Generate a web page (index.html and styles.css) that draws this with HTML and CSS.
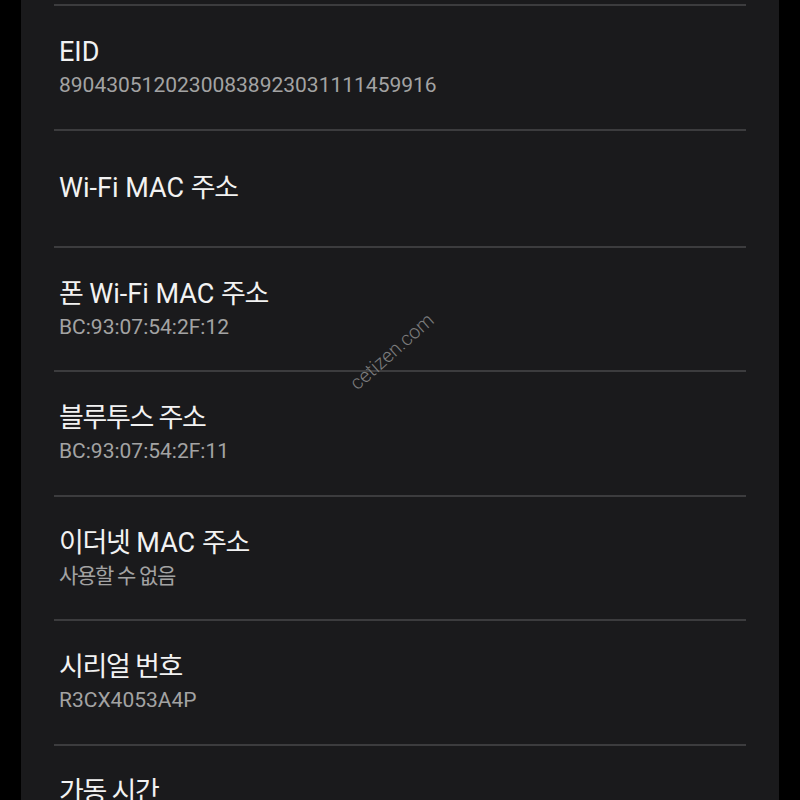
FILE: index.html
```html
<!DOCTYPE html>
<html lang="ko">

<head>
    <meta charset="UTF-8">
    <meta name="viewport" content="width=device-width, initial-scale=1.0">
    <title>휴대전화 정보</title>
    <link rel="stylesheet" href="styles.css">
</head>

<body>
    <div class="screen">
        <div class="card">
            <ul class="info-list">
                <li class="info-row">
                    <span class="info-title">EID</span>
                    <span class="info-value">89043051202300838923031111459916</span>
                </li>
                <li class="info-row single">
                    <span class="info-title">Wi-Fi MAC <span class="ko">주소</span></span>
                </li>
                <li class="info-row">
                    <span class="info-title"><span class="ko">폰</span> Wi-Fi MAC <span class="ko">주소</span></span>
                    <span class="info-value">BC:93:07:54:2F:12</span>
                </li>
                <li class="info-row">
                    <span class="info-title ko">블루투스 주소</span>
                    <span class="info-value">BC:93:07:54:2F:11</span>
                </li>
                <li class="info-row">
                    <span class="info-title"><span class="ko">이더넷</span> MAC <span class="ko">주소</span></span>
                    <span class="info-value ko">사용할 수 없음</span>
                </li>
                <li class="info-row">
                    <span class="info-title ko">시리얼 번호</span>
                    <span class="info-value">R3CX4053A4P</span>
                </li>
                <li class="info-row">
                    <span class="info-title ko">가동 시간</span>
                    <span class="info-value">&nbsp;</span>
                </li>
            </ul>
        </div>

        <!-- watermark -->
        <div class="watermark">cetizen.com</div>
    </div>
</body>

</html>
```

FILE: styles.css
```css
body {
    margin: 0;
    padding: 0;
    background-color: #000;
    font-family: Roboto, "Noto Sans CJK KR", sans-serif;
}

.screen {
    position: relative;
    width: 800px;
    height: 800px;
    overflow: hidden;
}

.card {
    margin: 0 21px;
    height: 100%;
    padding-top: 4px;
    box-sizing: border-box;
    background-color: #1a1a1c;
}

.info-list {
    list-style: none;
    margin: 0 33px;
    padding: 0;
    border-top: 2px solid #3c3c3e;
}

.info-row {
    display: flex;
    flex-direction: column;
    justify-content: center;
    height: 122.5px;
    padding: 0 5px;
    border-bottom: 2px solid #3c3c3e;
}

.info-row.single {
    height: 115px;
}

.info-title {
    font-size: 27px;
    line-height: 36px;
    color: #f2f2f2;
}

.info-value {
    font-size: 21px;
    line-height: 30px;
    color: #a3a3a3;
}

/* korean glyphs run narrower on the device font */
.ko {
    letter-spacing: -1.3px;
}

.watermark {
    position: absolute;
    left: 340px;
    top: 340px;
    font-size: 19.5px;
    font-weight: 300;
    color: #7c7c7c;
    transform: rotate(-41.5deg);
}
```
